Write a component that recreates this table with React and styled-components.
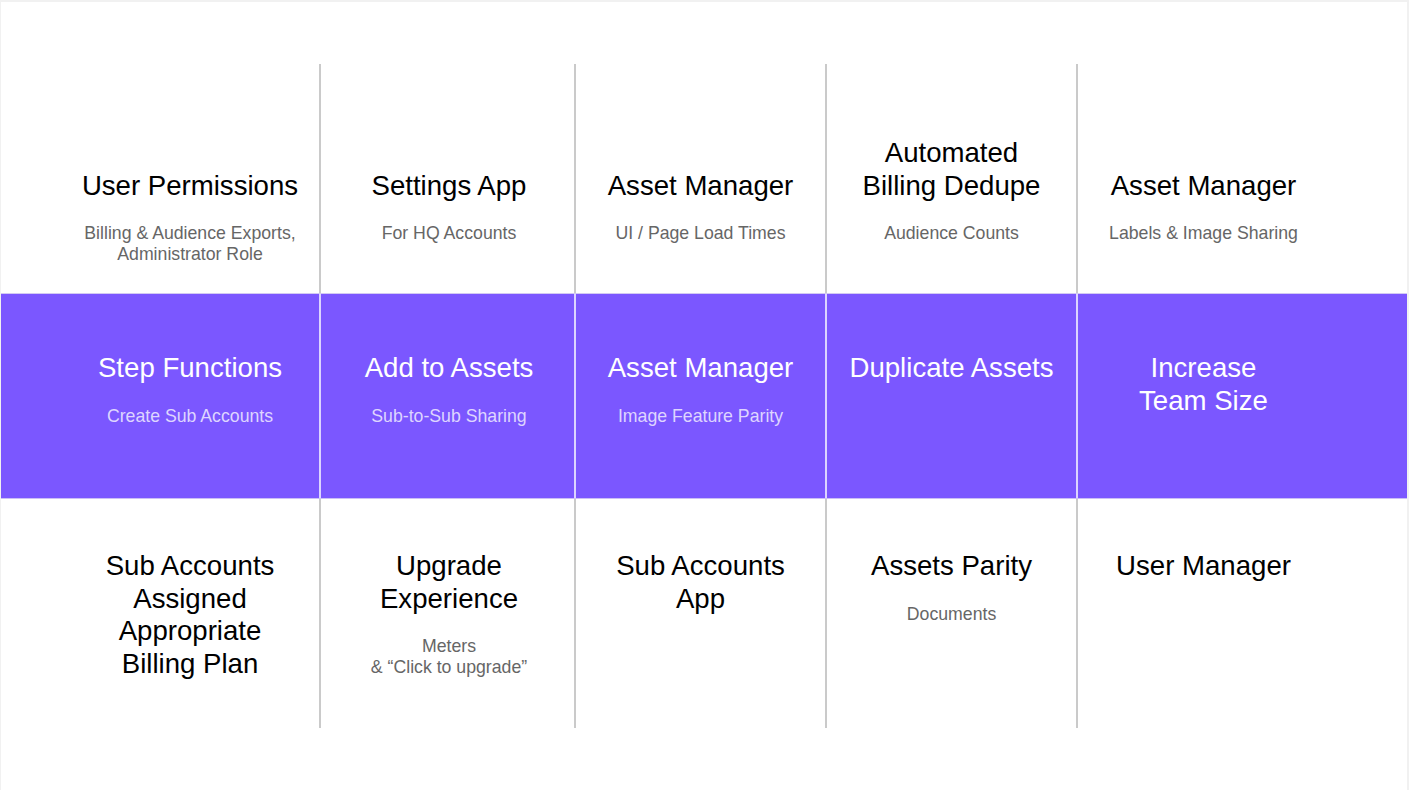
import React from "react";
import styled, { createGlobalStyle } from "styled-components";

const Global = createGlobalStyle`
  html, body { margin: 0; padding: 0; background: #f1f1f1; }
  body { font-family: "Liberation Sans", Arial, Helvetica, sans-serif; }
`;

const Frame = styled.div`
  padding: 2px 2px 0 1px;
  height: 790px;
  box-sizing: border-box;
`;

const Sheet = styled.main`
  background: #ffffff;
  height: 100%;
  padding-top: 62px;
  box-sizing: border-box;
`;

const Band = styled.section`
  background: ${(p) => (p.$accent ? "#7b57ff" : "transparent")};
  border-top: ${(p) => (p.$accent ? "1px solid #d2c9f3" : "none")};
  border-bottom: ${(p) => (p.$accent ? "1px solid #cbbff6" : "none")};
  padding-left: 60px;
`;

const Row = styled.div`
  display: grid;
  grid-template-columns: 260px 255px 251px 251px 251px;
  height: ${(p) => p.$height}px;
`;

const Cell = styled.div`
  box-sizing: border-box;
  display: flex;
  flex-direction: column;
  align-items: center;
  text-align: center;
  padding-top: ${(p) => p.$top}px;
  padding-left: ${(p) => (p.$shift ? "3px" : "0")};
  border-right: ${(p) =>
    p.$last ? "none" : `2px solid ${p.$accent ? "#dcd4ff" : "#cacaca"}`};
`;

const TitleBox = styled.div`
  display: flex;
  flex-direction: column;
  justify-content: flex-end;
  min-height: ${(p) => (p.$bottom ? "65px" : "0")};
`;

const Title = styled.h2`
  margin: 0;
  font-weight: 400;
  font-size: 27.6px;
  line-height: 32.5px;
  color: ${(p) => (p.$accent ? "#ffffff" : "#000000")};
  white-space: pre-line;
`;

const Sub = styled.p`
  margin: 21px 0 0;
  font-size: 17.7px;
  line-height: 21px;
  color: ${(p) => (p.$accent ? "#ded5ff" : "#666666")};
  white-space: pre-line;
`;

const rows = [
  {
    height: 229,
    top: 73,
    bottom: true,
    items: [
      { t: "User Permissions", s: "Billing & Audience Exports,\nAdministrator Role" },
      { t: "Settings App", s: "For HQ Accounts" },
      { t: "Asset Manager", s: "UI / Page Load Times" },
      { t: "Automated\nBilling Dedupe", s: "Audience Counts" },
      { t: "Asset Manager", s: "Labels & Image Sharing" },
    ],
  },
  {
    height: 204,
    top: 58,
    accent: true,
    items: [
      { t: "Step Functions", s: "Create Sub Accounts" },
      { t: "Add to Assets", s: "Sub-to-Sub Sharing" },
      { t: "Asset Manager", s: "Image Feature Parity" },
      { t: "Duplicate Assets" },
      { t: "Increase\nTeam Size" },
    ],
  },
  {
    height: 229,
    top: 51,
    items: [
      { t: "Sub Accounts\nAssigned\nAppropriate\nBilling Plan" },
      { t: "Upgrade\nExperience", s: "Meters\n& \u201cClick to upgrade\u201d" },
      { t: "Sub Accounts\nApp" },
      { t: "Assets Parity", s: "Documents" },
      { t: "User Manager" },
    ],
  },
];

export default function App() {
  return (
    <>
      <Global />
      <Frame>
        <Sheet>
          {rows.map((r, ri) => (
            <Band key={ri} $accent={r.accent}>
              <Row $height={r.height}>
                {r.items.map((it, i) => (
                  <Cell
                    key={i}
                    $top={r.top}
                    $accent={r.accent}
                    $shift={i === 1}
                    $last={i === r.items.length - 1}
                  >
                    <TitleBox $bottom={r.bottom}>
                      <Title $accent={r.accent}>{it.t}</Title>
                    </TitleBox>
                    {it.s && <Sub $accent={r.accent}>{it.s}</Sub>}
                  </Cell>
                ))}
              </Row>
            </Band>
          ))}
        </Sheet>
      </Frame>
    </>
  );
}
